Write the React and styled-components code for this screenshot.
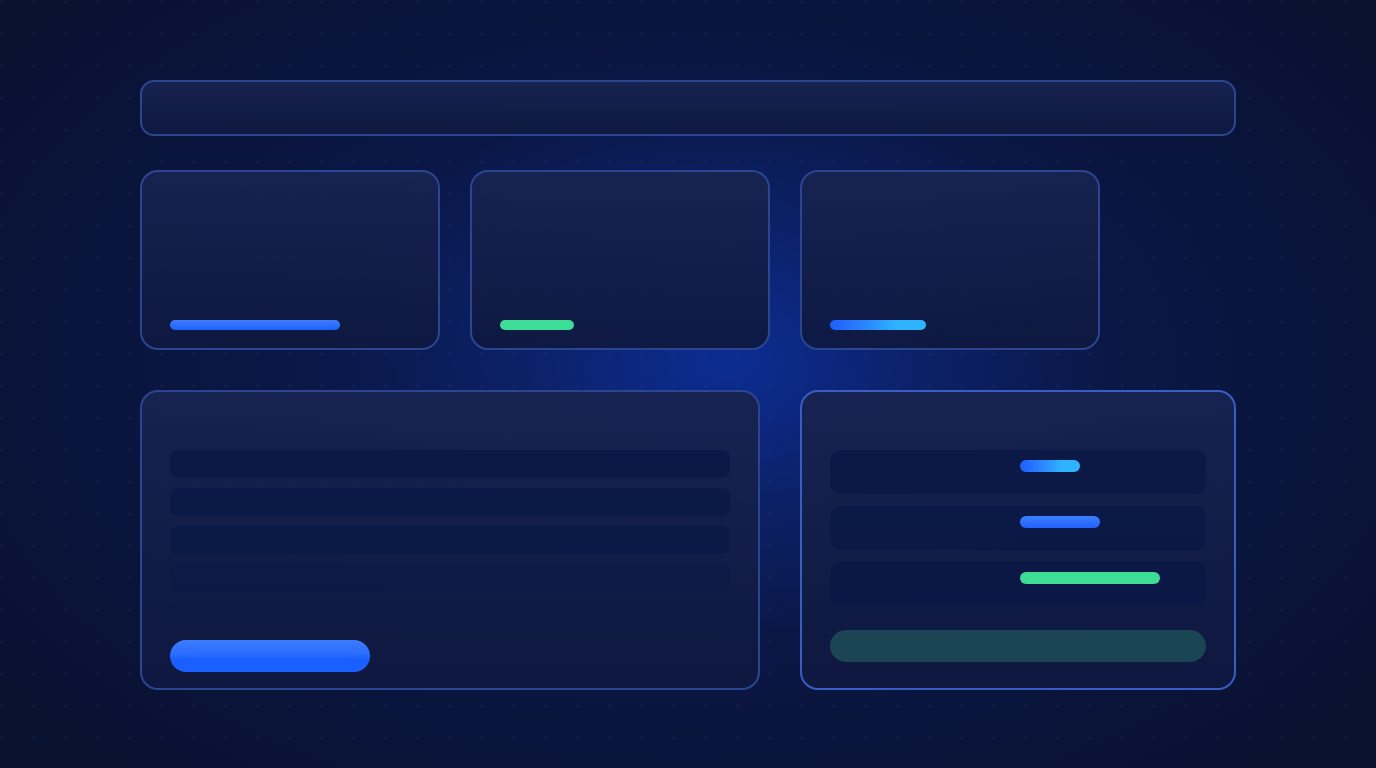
import styled, { createGlobalStyle } from "styled-components";

const GlobalStyle = createGlobalStyle`
  html, body {
    margin: 0;
    padding: 0;
    background: #0a1233;
    font-family: "Inter", "Liberation Sans", sans-serif;
  }
  * { box-sizing: border-box; }
`;

const Page = styled.div`
  width: 1376px;
  height: 768px;
  overflow: hidden;
  padding: 80px 0 0 140px;
  background:
    radial-gradient(circle at 2px 2px, rgba(60, 90, 170, 0.22) 1px, transparent 1.5px) 0 0 / 32px 32px,
    radial-gradient(ellipse 380px 280px at 53% 47%, rgba(12, 48, 160, 0.8) 0%, rgba(12, 40, 130, 0.45) 50%, transparent 100%),
    radial-gradient(ellipse 900px 560px at 50% 48%, #0b1e5c 0%, #0a1642 55%, #09112f 100%);
`;

const Frame = styled.div`
  width: 1096px;
  display: flex;
  flex-direction: column;
`;

const Panel = styled.div`
  border: 2px solid ${({ $bright }) => ($bright ? "#3a5dc4" : "#2b4590")};
  border-radius: ${({ $radius }) => $radius || 18}px;
  background: linear-gradient(180deg, rgba(23, 35, 80, 0.95) 0%, rgba(14, 24, 64, 0.93) 100%);
`;

const Header = styled(Panel)`
  height: 56px;
  margin-bottom: 34px;
`;

const CardRow = styled.div`
  display: flex;
  gap: 30px;
  margin-bottom: 40px;
`;

const StatCard = styled(Panel)`
  width: 300px;
  height: 180px;
  display: flex;
  flex-direction: column;
  justify-content: flex-end;
  padding: 0 28px 18px;
`;

const Bar = styled.div`
  width: ${({ $w }) => $w}px;
  height: ${({ $h }) => $h || 10}px;
  border-radius: 6px;
  background: ${({ $tone }) =>
    $tone === "green"
      ? "#3ddc97"
      : $tone === "sky"
      ? "linear-gradient(90deg, #1d5fff 0%, #2a7dff 30%, #2eb4ff 70%)"
      : "linear-gradient(180deg, #3f7dff 0%, #1e62ff 100%)"};
`;

const BottomRow = styled.div`
  display: flex;
  gap: 40px;
`;

const ListPanel = styled(Panel)`
  width: 620px;
  height: 300px;
  padding: 58px 28px 0;
  display: flex;
  flex-direction: column;
`;

const RowStack = styled.div`
  display: flex;
  flex-direction: column;
  gap: ${({ $gap }) => $gap}px;
`;

const ListRow = styled.div`
  height: 28px;
  border-radius: 8px;
  background: rgba(10, 24, 70, ${({ $alpha }) => $alpha});
`;

const PrimaryButton = styled.div`
  width: 200px;
  height: 32px;
  margin-top: 10px;
  border-radius: 16px;
  background: linear-gradient(180deg, #3d7cff 0%, #2a6cff 45%, #1a5fff 60%, #1a5fff 100%);
`;

const SidePanel = styled(Panel)`
  width: 436px;
  height: 300px;
  padding: 58px 28px 0;
  display: flex;
  flex-direction: column;
`;

const SideRow = styled.div`
  height: 44px;
  border-radius: 10px;
  background: rgba(10, 24, 70, 0.8);
  padding: 10px 0 0 190px;
`;

const TealButton = styled.div`
  height: 32px;
  margin-top: 24px;
  border-radius: 16px;
  background: #1b4552;
`;

const cards = [
  { w: 170, tone: "blue" },
  { w: 74, tone: "green" },
  { w: 96, tone: "sky" },
];

const listAlpha = [0.8, 0.8, 0.75, 0.5, 0.25];

const sideBars = [
  { w: 60, tone: "sky" },
  { w: 80, tone: "blue" },
  { w: 140, tone: "green" },
];

export default function App() {
  return (
    <>
      <GlobalStyle />
      <Page>
        <Frame>
          <Header $radius={14} />
          <CardRow>
            {cards.map((c, i) => (
              <StatCard key={i}>
                <Bar $w={c.w} $tone={c.tone} />
              </StatCard>
            ))}
          </CardRow>
          <BottomRow>
            <ListPanel>
              <RowStack $gap={10}>
                {listAlpha.map((a, i) => (
                  <ListRow key={i} $alpha={a} />
                ))}
              </RowStack>
              <PrimaryButton />
            </ListPanel>
            <SidePanel $bright>
              <RowStack $gap={12}>
                {sideBars.map((b, i) => (
                  <SideRow key={i}>
                    <Bar $w={b.w} $h={12} $tone={b.tone} />
                  </SideRow>
                ))}
              </RowStack>
              <TealButton />
            </SidePanel>
          </BottomRow>
        </Frame>
      </Page>
    </>
  );
}
